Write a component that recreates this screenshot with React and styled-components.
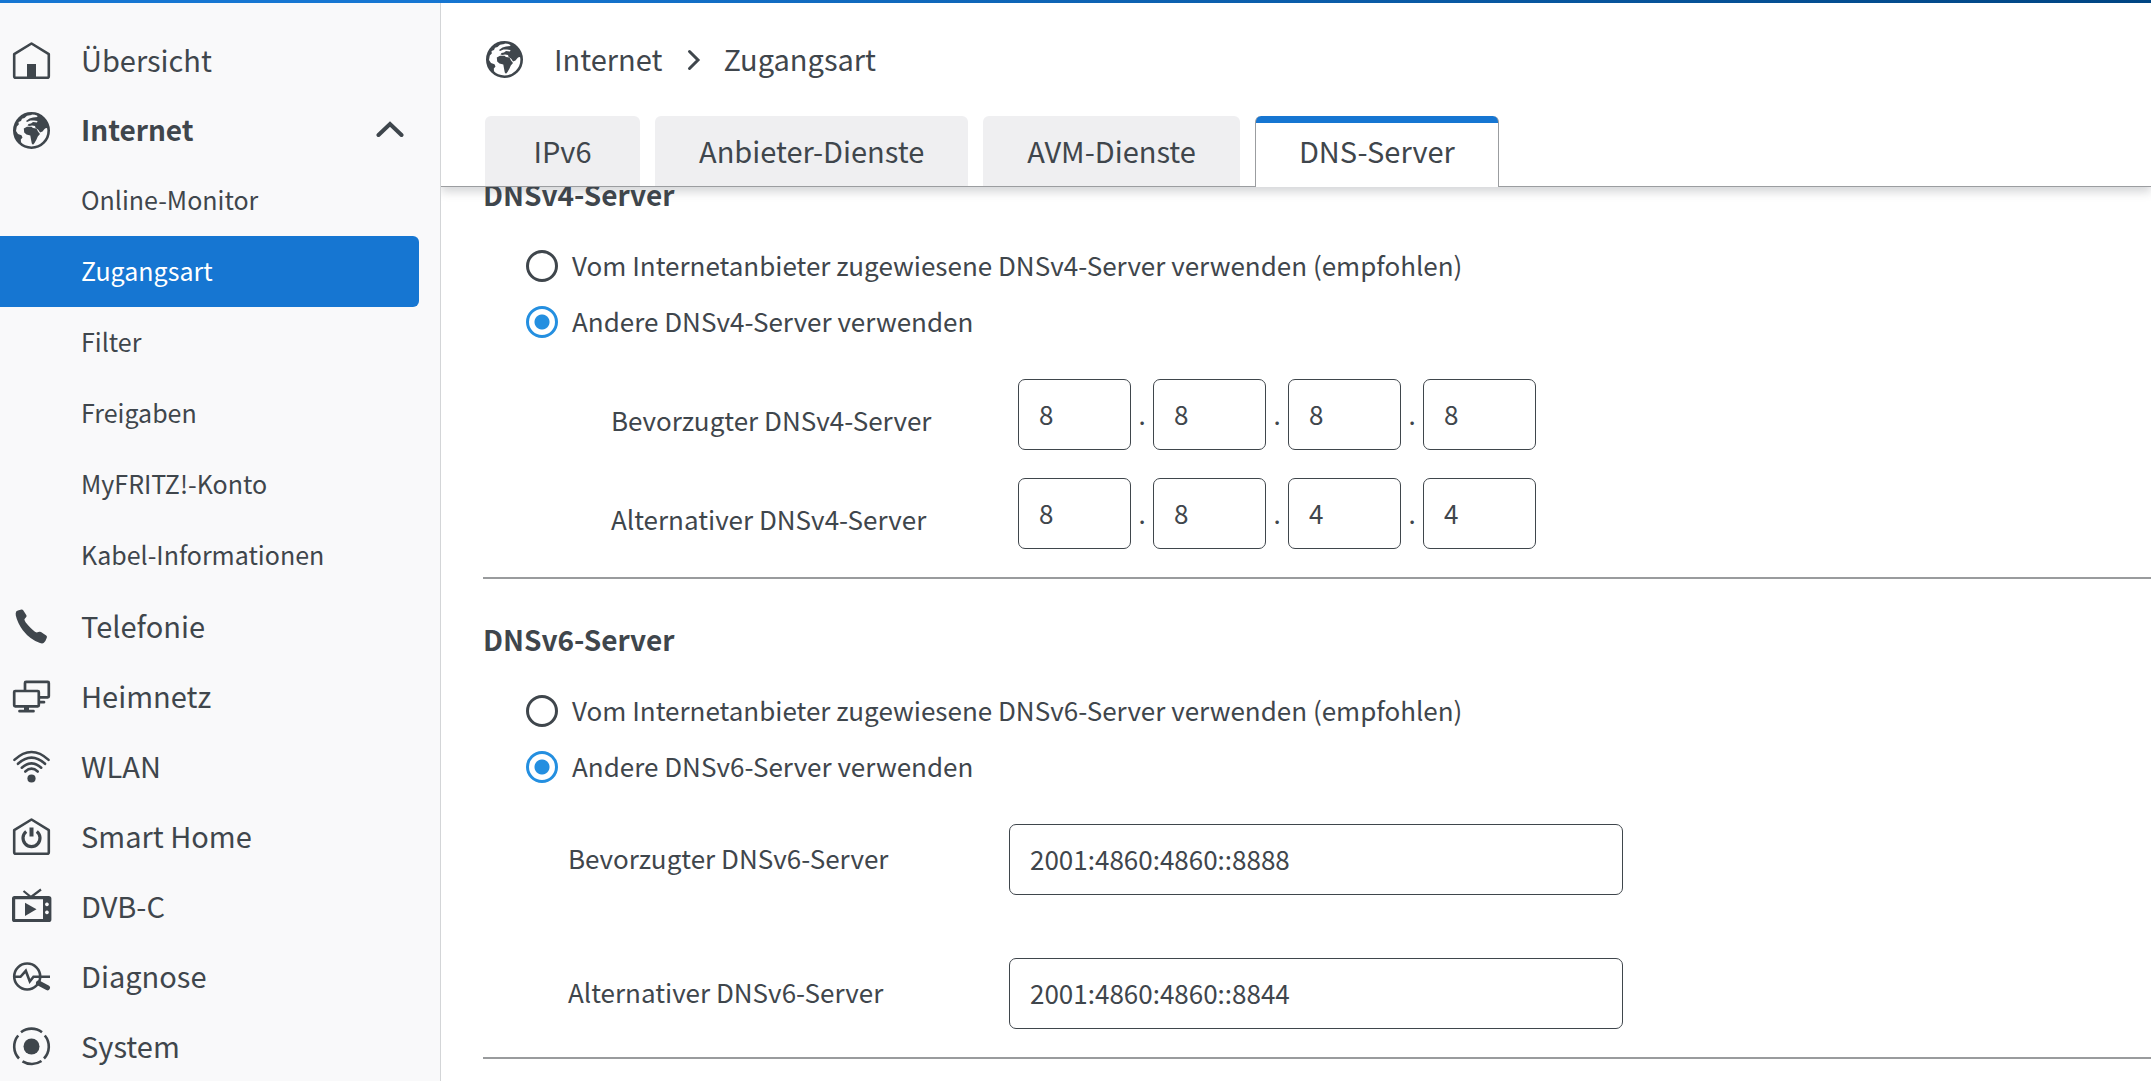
import { useState } from "react";
import styled, { createGlobalStyle } from "styled-components";

const colors = {
  text: "#3f464c",
  blue: "#1676d2",
  radio: "#248fe0",
  side: "#f9f9fa",
  tab: "#efeff1",
  line: "#9b9da0",
};

const Glyph = ({ children }) => <Icon viewBox="0 0 37 37">{children}</Icon>;

const GlobeIcon = () => (
  <Glyph>
    <circle cx="18.5" cy="18.5" r="17.2" fill="none" stroke="currentColor" strokeWidth="2.6" />
    <path d="M16.5 6.5 L20 5.5 L24.5 5 L24 3.5 L26 2.5 L31 6 L35 12 L35.8 16.5 L33 16 L31.5 17 L29.5 19.5 L27 20.5 L25.5 18 L22.5 15.8 L22 14 L19 13.5 L16.5 14 L14.5 13.5 L15.5 12 L18 11.5 L20 10 L24 10.5 L24.5 9 L21 8.5 L17.5 8.5 L14 10 L13 9 Z" />
    <path d="M10.8 16.5 L14 14.8 L18.5 14.8 L20 16 L23.5 16.5 L25 19.5 L27 22 L24.8 24.5 L23.5 27.5 L21.5 31 L20 32.8 L18.8 31.5 L18 27.5 L17.3 23.5 L13.5 22.5 L11.2 20.5 Z" />
    <path d="M1.5 16 L4 9.5 L9 4 L15 1.5 L19 1.2 L18.5 3 L14 3.8 L11.5 6 L9 6.8 L8 9 L5.5 10 L5.8 12.5 L3.8 14.5 L3 19 L5 22 L8.5 23.2 L9.5 25.5 L7.8 27.5 L8 30.5 L9.5 32.8 L4.5 29 L1.8 24 Z" />
  </Glyph>
);

const icons = {
  globe: <GlobeIcon />,
  home: (
    <Glyph>
      <path d="M1.2 12.2 L18.5 1.5 L35.8 12.2 V34.3 Q35.8 35.8 34.3 35.8 H2.7 Q1.2 35.8 1.2 34.3 Z" fill="none" stroke="currentColor" strokeWidth="2.6" strokeLinejoin="round" />
      <path d="M14 22 h9 v14 h-9 Z" />
    </Glyph>
  ),
  phone: (
    <Glyph>
      <path d="M3.2 3.6 Q4 2.6 8.6 1.6 Q9.6 1.5 10.2 2.3 L13.4 7.2 Q13.9 8.2 13.2 9 L11.4 11.2 Q11.5 13.5 16 18.3 Q20.5 23.2 23.6 24.6 L26.4 23.8 Q27.3 23.5 28 24.1 L33.2 27.6 Q34.4 28.5 33.8 29.7 Q32.7 33 30.9 34.8 Q29.5 36 27 35.1 Q17 31.5 10 22.5 Q4.5 15 2.8 7.5 Q2.4 5 3.2 3.6 Z" />
    </Glyph>
  ),
  network: (
    <Glyph>
      <g fill="none" stroke="currentColor" strokeWidth="2.7" strokeLinejoin="round">
        <path d="M12 12 V4.9 Q12 3.9 13 3.9 H34.8 Q35.8 3.9 35.8 4.9 V18.3 Q35.8 19.3 34.8 19.3 H26.5" />
        <rect x="1.2" y="13" width="24.6" height="15.3" rx="1" />
        <path d="M6.5 33.2 H20.5 M26.5 24.2 H31" strokeLinecap="round" />
      </g>
      <path d="M11 28 h5 v5 h-5 Z" />
    </Glyph>
  ),
  wifi: (
    <Glyph>
      <g fill="none" stroke="currentColor" strokeWidth="2.6" strokeLinecap="round">
        <path d="M1.4 11.9 Q18.5 -3.9 35.6 11.9" />
        <path d="M5 15.8 Q18.5 3.4 32 15.8" />
        <path d="M8.8 19.7 Q18.5 11.1 28.2 19.7" />
        <path d="M12.3 23.5 Q18.5 17.7 24.7 23.5" />
      </g>
      <circle cx="18.5" cy="30.5" r="4.1" />
    </Glyph>
  ),
  smart: (
    <Glyph>
      <path d="M1.2 12.2 L18.5 1.5 L35.8 12.2 V34.3 Q35.8 35.8 34.3 35.8 H2.7 Q1.2 35.8 1.2 34.3 Z" fill="none" stroke="currentColor" strokeWidth="2.6" strokeLinejoin="round" />
      <path d="M13.2 13.4 A8.5 8.5 0 1 0 23.8 13.4" fill="none" stroke="currentColor" strokeWidth="3.2" />
      <path d="M18.5 9.5 V18.5" stroke="currentColor" strokeWidth="4" />
    </Glyph>
  ),
  tv: (
    <Glyph>
      <path d="M10.5 3 L18 9 L28 1.5" fill="none" stroke="currentColor" strokeWidth="2.2" />
      <path fillRule="evenodd" d="M1.5 8 H35.5 Q38.4 8 38.4 10.5 V31.5 Q38.4 34.1 35.5 34.1 H1.5 Q-1 34.1 -1 31.5 V10.5 Q-1 8 1.5 8 Z M2.2 11.2 V31 H30 V11.2 Z M33.9 14.5 a1.9 1.9 0 1 0 .1 0 Z M33.9 22.5 a1.9 1.9 0 1 0 .1 0 Z" />
      <path d="M12 14.7 L23.5 21.3 L12 28 Z" />
    </Glyph>
  ),
  diagnose: (
    <Glyph>
      <g fill="none" stroke="currentColor" strokeWidth="2.6">
        <circle cx="14.2" cy="18.5" r="13" />
        <path d="M1 18.8 H7.5 L12.8 12.8 L16.8 23.5 L20.5 18.8 H37" />
        <path d="M25.5 25 L34.5 29.8" strokeWidth="5" strokeLinecap="round" />
      </g>
    </Glyph>
  ),
  system: (
    <Glyph>
      <circle cx="18.5" cy="18.5" r="8" />
      <path d="M8 4.2 A17.3 17.3 0 0 1 29 4.2 M5.2 7.5 A17.3 17.3 0 0 0 6 30.5 M31.8 7.5 A17.3 17.3 0 0 1 31 30.5 M9.5 33.3 A17.3 17.3 0 0 0 28.5 33" fill="none" stroke="currentColor" strokeWidth="2.6" />
    </Glyph>
  ),
};

const subItems = [
  "Online-Monitor",
  "Zugangsart",
  "Filter",
  "Freigaben",
  "MyFRITZ!-Konto",
  "Kabel-Informationen",
];

const menu = [
  { label: "Übersicht", icon: "home" },
  { label: "Internet", icon: "globe", children: subItems },
  { label: "Telefonie", icon: "phone" },
  { label: "Heimnetz", icon: "network" },
  { label: "WLAN", icon: "wifi" },
  { label: "Smart Home", icon: "smart" },
  { label: "DVB-C", icon: "tv" },
  { label: "Diagnose", icon: "diagnose" },
  { label: "System", icon: "system" },
];

const tabs = ["IPv6", "Anbieter-Dienste", "AVM-Dienste", "DNS-Server"];

const v4Rows = [
  { label: "Bevorzugter DNSv4-Server", value: ["8", "8", "8", "8"] },
  { label: "Alternativer DNSv4-Server", value: ["8", "8", "4", "4"] },
];

const v6Rows = [
  { id: "dns6-first", label: "Bevorzugter DNSv6-Server", value: "2001:4860:4860::8888" },
  { id: "dns6-second", label: "Alternativer DNSv6-Server", value: "2001:4860:4860::8844" },
];

const Sidebar = () => {
  const [open, setOpen] = useState(true);
  const [active, setActive] = useState("Zugangsart");

  return (
    <Side>
      {menu.map((item) => (
        <div key={item.label}>
          {item.children ? (
            <MenuButton type="button" aria-expanded={open} onClick={() => setOpen(!open)}>
              {icons[item.icon]}
              <Label>{item.label}</Label>
              <Chevron viewBox="0 0 28 18" $open={open}>
                <path d="M2.5 14 L14 3 L25.5 14" />
              </Chevron>
            </MenuButton>
          ) : (
            <MenuLink href="#">
              {icons[item.icon]}
              <Label>{item.label}</Label>
            </MenuLink>
          )}
          {item.children &&
            open &&
            item.children.map((sub) => (
              <SubLink
                key={sub}
                href="#"
                $active={sub === active}
                onClick={() => setActive(sub)}
              >
                <Label>{sub}</Label>
              </SubLink>
            ))}
        </div>
      ))}
    </Side>
  );
};

const ServerChoice = ({ version }) => {
  const [own, setOwn] = useState(true);
  const name = `dns${version}`;

  return (
    <Choices>
      <Choice>
        <Radio type="radio" name={name} checked={!own} onChange={() => setOwn(false)} />
        <Label>Vom Internetanbieter zugewiesene DNSv{version}-Server verwenden (empfohlen)</Label>
      </Choice>
      <Choice>
        <Radio type="radio" name={name} checked={own} onChange={() => setOwn(true)} />
        <Label>Andere DNSv{version}-Server verwenden</Label>
      </Choice>
    </Choices>
  );
};

export default function App() {
  const [tab, setTab] = useState("DNS-Server");

  return (
    <>
      <GlobalStyle />
      <Page>
        <TopBar />
        <Body>
          <Sidebar />
          <Main>
            <Header>
              <Breadcrumb>
                <GlobeIcon />
                <Crumb href="#">Internet</Crumb>
                <Arrow viewBox="0 0 14 22">
                  <path d="M2.5 2.5 L11 11 L2.5 19.5" />
                </Arrow>
                <Crumb href="#">Zugangsart</Crumb>
              </Breadcrumb>
              <Tabs role="tablist">
                {tabs.map((t) => (
                  <Tab
                    key={t}
                    type="button"
                    role="tab"
                    aria-selected={t === tab}
                    $active={t === tab}
                    onClick={() => setTab(t)}
                  >
                    {t}
                  </Tab>
                ))}
              </Tabs>
            </Header>

            <Content>
              <Section>
                <Heading>DNSv4-Server</Heading>
                <ServerChoice version={4} />
                <V4Fields>
                  {v4Rows.map((row) => (
                    <Row key={row.label} role="group" aria-label={row.label}>
                      <V4Label>{row.label}</V4Label>
                      {row.value.map((octet, i) => (
                        <Row key={i}>
                          {i > 0 && <Dot>.</Dot>}
                          <OctetInput
                            aria-label={`${row.label} ${i + 1}`}
                            maxLength={3}
                            defaultValue={octet}
                          />
                        </Row>
                      ))}
                    </Row>
                  ))}
                </V4Fields>
              </Section>

              <Section>
                <Heading>DNSv6-Server</Heading>
                <ServerChoice version={6} />
                <V6Fields>
                  {v6Rows.map((row) => (
                    <Row key={row.id}>
                      <V6Label htmlFor={row.id}>{row.label}</V6Label>
                      <AddressInput id={row.id} defaultValue={row.value} />
                    </Row>
                  ))}
                </V6Fields>
              </Section>
            </Content>
          </Main>
        </Body>
      </Page>
    </>
  );
}

const GlobalStyle = createGlobalStyle`
  * {
    box-sizing: border-box;
  }

  body {
    margin: 0;
    background: white;
    color: ${colors.text};
    font-family: "Noto Sans CJK SC", "Noto Sans", sans-serif;
    font-size: 26px;
    line-height: 36px;
  }

  a {
    color: inherit;
    text-decoration: none;
  }

  button, input {
    font: inherit;
    color: inherit;
  }
`;

const Page = styled.div`
  display: flex;
  flex-direction: column;
  height: 100vh;
  overflow: hidden;
`;

const TopBar = styled.div`
  flex: none;
  height: 3px;
  background: linear-gradient(to right, ${colors.blue} 20%, #004583);
`;

const Body = styled.div`
  display: flex;
  flex: 1;
  min-height: 0;
`;

const Side = styled.nav`
  flex: none;
  width: 441px;
  padding: 22px 21px 0 0;
  overflow: hidden;
  background: ${colors.side};
  border-right: 1px solid #d3d5d7;
`;

const Icon = styled.svg`
  flex: none;
  width: 37px;
  height: 37px;
  fill: currentColor;
  overflow: visible;
`;

const Label = styled.span`
  padding-bottom: 3px;
`;

const MenuLink = styled.a`
  display: flex;
  align-items: center;
  gap: 31px;
  width: 100%;
  height: 70px;
  padding: 0 15px 0 13px;
  font-size: 29px;
`;

const MenuButton = styled(MenuLink).attrs({ as: "button" })`
  border: none;
  background: none;
  font-size: 28px;
  font-weight: bold;
  text-align: left;
  cursor: pointer;
`;

const Chevron = styled.svg`
  width: 28px;
  height: 18px;
  margin-left: auto;
  fill: none;
  stroke: currentColor;
  stroke-width: 4;
  stroke-linecap: round;
  transform: ${({ $open }) => ($open ? "none" : "rotate(180deg)")};
`;

const SubLink = styled.a`
  display: flex;
  align-items: center;
  height: 71px;
  padding-left: 81px;
  border-radius: 0 6px 6px 0;
  color: ${({ $active }) => ($active ? "white" : "inherit")};
  background: ${({ $active }) => ($active ? colors.blue : "none")};
  font-size: 25px;
`;

const Main = styled.main`
  display: flex;
  flex: 1;
  flex-direction: column;
  min-width: 0;
  overflow: hidden;
`;

const Header = styled.header`
  position: relative;
  z-index: 1;
  flex: none;
  padding-left: 44px;
  background: white;
  border-bottom: 1px solid ${colors.line};
  box-shadow: 0 5px 9px rgba(63, 70, 76, 0.22);
`;

const Breadcrumb = styled.div`
  display: flex;
  align-items: center;
  height: 113px;
  padding-left: 1px;
  font-size: 29px;
`;

const Crumb = styled.a`
  margin: 0 25px 0 22px;
  padding-bottom: 3px;

  &:first-of-type {
    margin-left: 31px;
  }
`;

const Arrow = styled.svg`
  width: 14px;
  height: 22px;
  fill: none;
  stroke: currentColor;
  stroke-width: 3;
  stroke-linecap: round;
`;

const Tabs = styled.div`
  display: flex;
  gap: 15px;
`;

const Tab = styled.button`
  min-width: 155px;
  height: ${({ $active }) => ($active ? "71px" : "70px")};
  margin-bottom: ${({ $active }) => ($active ? "-1px" : "0")};
  padding: ${({ $active }) => ($active ? "0 43px 3px" : "0 44px 2px")};
  border: 0 solid ${colors.line};
  border-width: ${({ $active }) => ($active ? "0 1px" : "0")};
  border-radius: 6px 6px 0 0;
  background: ${({ $active }) =>
    $active ? `linear-gradient(${colors.blue} 7px, white 7px)` : colors.tab};
  background-origin: border-box;
  font-size: 29px;
  cursor: pointer;
`;

const Content = styled.div`
  flex: 1;
  min-height: 0;
  margin-top: -53px;
  padding-left: 42px;
`;

const Section = styled.section`
  padding: 42px 0 28px;
  border-bottom: 2px solid #999b9d;
`;

const Heading = styled.h2`
  margin: 0;
  font-size: 28px;
  line-height: 36px;
`;

const Choices = styled.div`
  padding: 26px 0 29px 43px;
`;

const Choice = styled.label`
  display: flex;
  align-items: center;
  gap: 14px;
  height: 56px;
`;

const Radio = styled.input`
  appearance: none;
  width: 32px;
  height: 32px;
  margin: 0;
  border: 3px solid ${colors.text};
  border-radius: 50%;

  &:checked {
    border-color: ${colors.radio};
    background: radial-gradient(circle, ${colors.radio} 7px, white 8px);
  }
`;

const TextInput = styled.input`
  height: 71px;
  padding: 0 20px 2px;
  border: 1px solid ${colors.text};
  border-radius: 7px;
  background: white;
`;

const Row = styled.div`
  display: flex;
  align-items: center;
`;

const V4Fields = styled.div`
  display: grid;
  gap: 28px;
  padding-left: 128px;
`;

const V4Label = styled.span`
  width: 407px;
  padding-top: 11px;
`;

const Dot = styled.span`
  width: 22px;
  padding-bottom: 2px;
  text-align: center;
`;

const OctetInput = styled(TextInput)`
  width: 113px;
`;

const V6Fields = styled.div`
  display: grid;
  gap: 63px;
  padding-left: 85px;
`;

const V6Label = styled.label`
  width: 441px;
  padding-bottom: 3px;
`;

const AddressInput = styled(TextInput)`
  width: 614px;
`;
